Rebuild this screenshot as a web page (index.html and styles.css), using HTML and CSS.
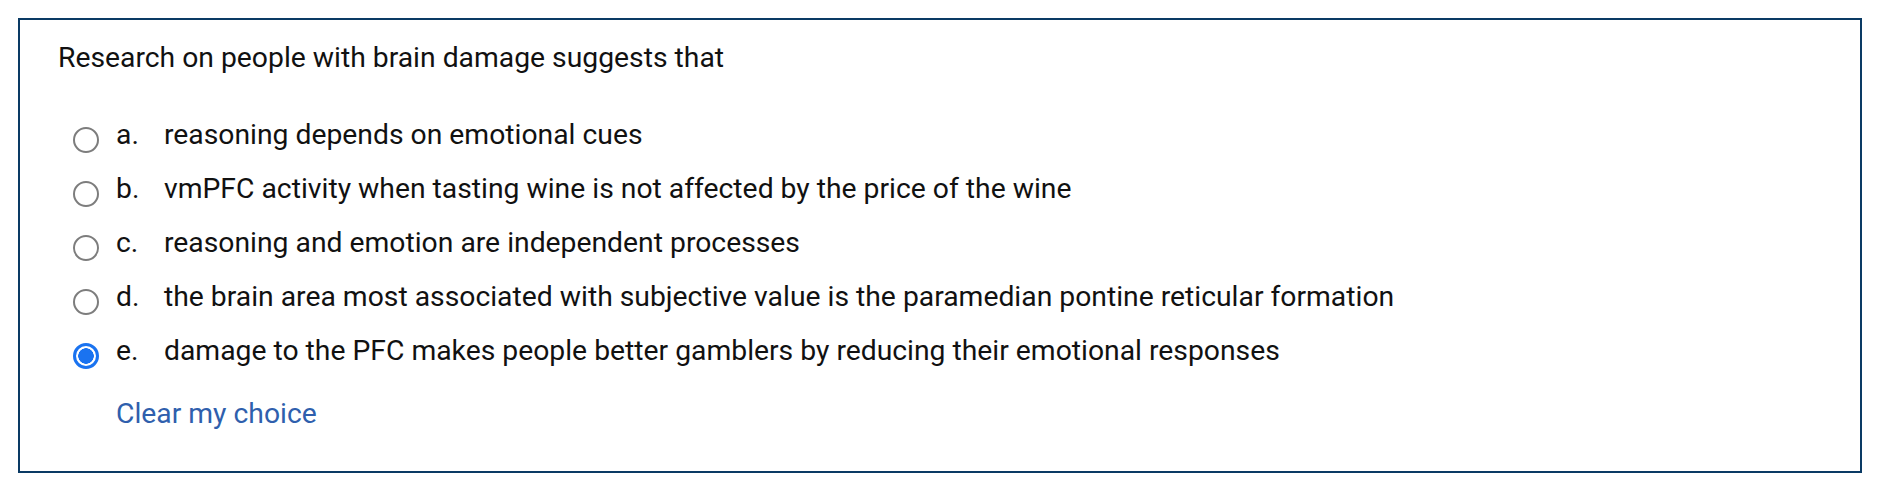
FILE: index.html
```html
<!DOCTYPE html>
<html lang="en">
<head>
<meta charset="utf-8">
<title>Question</title>
<link rel="stylesheet" href="styles.css">
</head>
<body>
<div class="que">
  <div class="qtext">Research on people with brain damage suggests that</div>
  <div class="answers">
    <label class="opt"><span class="radio"></span><span class="num">a.</span><span class="txt">reasoning depends on emotional cues</span></label>
    <label class="opt"><span class="radio"></span><span class="num">b.</span><span class="txt">vmPFC activity when tasting wine is not affected by the price of the wine</span></label>
    <label class="opt"><span class="radio"></span><span class="num">c.</span><span class="txt">reasoning and emotion are independent processes</span></label>
    <label class="opt"><span class="radio"></span><span class="num">d.</span><span class="txt">the brain area most associated with subjective value is the paramedian pontine reticular formation</span></label>
    <label class="opt"><span class="radio checked"></span><span class="num">e.</span><span class="txt">damage to the PFC makes people better gamblers by reducing their emotional responses</span></label>
  </div>
  <a class="clear" href="#">Clear my choice</a>
</div>
</body>
</html>
```
FILE: styles.css
```css
html, body {
  margin: 0;
  padding: 0;
  background: #ffffff;
}
body {
  padding: 18px 36px 18px 18px;
  font-family: Roboto, "Liberation Sans", Arial, sans-serif;
  font-size: 28.3px;
  color: #111111;
}
.que {
  border: 2px solid #0a3a64;
  padding: 18px 38px 37px 38px;
  box-sizing: border-box;
  height: 455px;
}
.qtext {
  line-height: 40px;
}
.answers {
  margin-top: 30px;
  display: flex;
  flex-direction: column;
}
.opt {
  display: flex;
  align-items: flex-start;
  height: 54px;
  line-height: 54px;
}
.radio {
  flex: none;
  width: 26px;
  height: 26px;
  box-sizing: border-box;
  border: 2px solid #7d7d7d;
  border-radius: 50%;
  margin: 19px 17px 0 15px;
  background: #fff;
}
.radio.checked {
  border: 3px solid #1a73f0;
  background: radial-gradient(circle, #1a73f0 0 7.5px, #ffffff 8px);
}
.num {
  flex: none;
  width: 48px;
}
.clear {
  display: inline-block;
  margin-top: 16px;
  margin-left: 58px;
  line-height: 40px;
  color: #2f5fad;
  text-decoration: none;
}
```
